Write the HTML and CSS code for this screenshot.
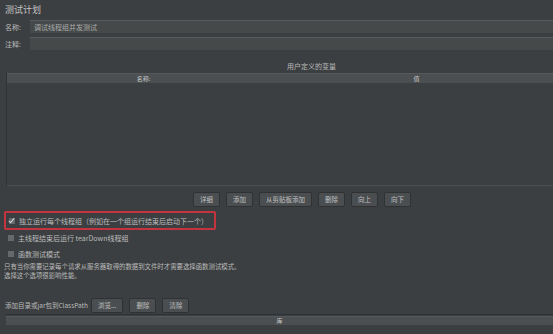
FILE: index.html
```html
<!DOCTYPE html>
<html lang="zh-CN">
  <head>
    <meta charset="UTF-8" />
    <title>测试计划</title>
    <link rel="stylesheet" href="styles.css">
  </head>
  <body>
    <div class="panel">
      <div class="title">测试计划</div>
      <div class="field">
        <label>名称:</label>
        <div class="input">调试线程组并发测试</div>
      </div>
      <div class="field">
        <label>注释:</label>
        <div class="input"></div>
      </div>

      <div class="caption">用户定义的变量</div>
      <div class="table">
        <div class="thead">
          <span class="col">名称:</span>
          <span class="col">值</span>
        </div>
        <div class="tbody"></div>
      </div>

      <div class="buttons">
        <span class="btn">详细</span>
        <span class="btn">添加</span>
        <span class="btn">从剪贴板添加</span>
        <span class="btn">删除</span>
        <span class="btn">向上</span>
        <span class="btn">向下</span>
      </div>

      <div class="options">
        <div class="check highlight"><i class="box checked"></i>独立运行每个线程组（例如在一个组运行结束后启动下一个）</div>
        <div class="check"><i class="box"></i>主线程结束后运行 tearDown线程组</div>
        <div class="check"><i class="box"></i>函数测试模式</div>
        <p class="note">只有当你需要记录每个请求从服务器取得的数据到文件时才需要选择函数测试模式。<br>选择这个选项很影响性能。</p>
      </div>

      <div class="classpath">
        <span class="cp-label">添加目录或jar包到ClassPath</span>
        <span class="btn">浏览...</span>
        <span class="btn">删除</span>
        <span class="btn">清除</span>
      </div>
      <div class="libs">
        <div class="thead single"><span class="col">库</span></div>
      </div>
    </div>
  </body>
</html>
```

FILE: styles.css
```css
html, body {
  margin: 0;
  height: 100%;
  background: #3c3f41;
}
body {
  font-family: "Noto Sans CJK SC", "Liberation Sans", sans-serif;
  color: #bbbbbb;
  font-size: 7px;
  overflow: hidden;
}
.panel {
  display: flex;
  flex-direction: column;
  height: 334px;
}
.title {
  font-size: 9px;
  padding: 3px 0 0 5px;
  height: 15px;
  line-height: 13px;
  color: #c4c4c4;
}
.field {
  display: flex;
  align-items: center;
  height: 17px;
}
.field label {
  width: 25px;
  padding-left: 5px;
}
.input {
  flex: 1;
  height: 12px;
  line-height: 12px;
  background: #45494a;
  border-top: 1px solid #555a5c;
  padding-left: 4px;
  color: #a9a9a9;
}
.caption {
  text-align: center;
  margin: 9px 0 0 70px;
  height: 10px;
  line-height: 10px;
}
.table {
  margin: 2px 0 0 6px;
  border-left: 1px solid #2f3234;
  height: 113px;
  display: flex;
  flex-direction: column;
}
.thead {
  display: flex;
  height: 9px;
  line-height: 9px;
  background: #4b4f51;
  border-top: 1px solid #55595b;
  font-size: 6px;
  color: #c8c8c8;
}
.thead .col {
  flex: 1;
  text-align: center;
}
.tbody {
  flex: 1;
  border-bottom: 1px solid #4a4e50;
}
.buttons {
  display: flex;
  gap: 6px;
  padding-left: 193px;
  margin-top: 6px;
  height: 14px;
}
.btn {
  display: inline-block;
  height: 13px;
  line-height: 13px;
  padding: 0 6px;
  background: #4a4e50;
  border: 1px solid #2f3133;
  border-radius: 2px;
  font-size: 6.5px;
  color: #c0c0c0;
}
.options {
  margin-top: 5px;
}
.check {
  display: flex;
  align-items: center;
  height: 16px;
  padding-left: 8px;
  gap: 4px;
}
.check.highlight {
  margin-left: 4px;
  padding-left: 3px;
  width: 205px;
  height: 15px;
  border: 2px solid #c4343e;
  border-radius: 2px;
}
.box {
  width: 6px;
  height: 6px;
  background: #65696b;
  position: relative;
}
.box.checked::after {
  content: "";
  position: absolute;
  left: 1px;
  top: -1px;
  width: 2px;
  height: 5px;
  border: solid #d6d6d6;
  border-width: 0 1.5px 1.5px 0;
  transform: rotate(40deg);
}
.note {
  margin: 0 0 0 4px;
  font-size: 6.4px;
  line-height: 9px;
}
.classpath {
  display: flex;
  align-items: center;
  gap: 6px;
  margin-top: 17px;
  padding-left: 5px;
  height: 16px;
}
.cp-label {
  font-size: 6.5px;
  margin-right: -3px;
}
.libs {
  margin: 1px 0 0 6px;
  border-top: 1px solid #2f3234;
  padding-top: 1px;
}
.thead.single {
  height: 8px;
  line-height: 8px;
}
```
